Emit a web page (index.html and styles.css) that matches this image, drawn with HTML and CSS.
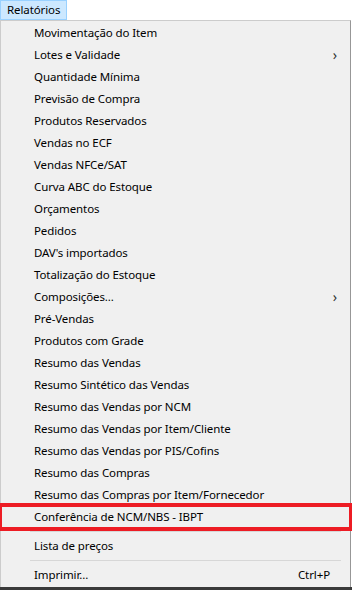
FILE: index.html
```html
<!DOCTYPE html>
<html lang="pt">
  <head>
    <meta charset="UTF-8" />
    <title>Relatórios</title>
    <link rel="stylesheet" href="styles.css">
  </head>
  <body>
    <div class="menubar">
      <div class="menubar-item active">Relatórios</div>
    </div>
    <div class="menu">
      <div class="item">Movimentação do Item</div>
      <div class="item has-sub">Lotes e Validade<span class="arrow">&rsaquo;</span></div>
      <div class="item">Quantidade Mínima</div>
      <div class="item">Previsão de Compra</div>
      <div class="item">Produtos Reservados</div>
      <div class="item">Vendas no ECF</div>
      <div class="item">Vendas NFCe/SAT</div>
      <div class="item">Curva ABC do Estoque</div>
      <div class="item">Orçamentos</div>
      <div class="item">Pedidos</div>
      <div class="item">DAV's importados</div>
      <div class="item">Totalização do Estoque</div>
      <div class="item has-sub">Composições...<span class="arrow">&rsaquo;</span></div>
      <div class="item">Pré-Vendas</div>
      <div class="item">Produtos com Grade</div>
      <div class="item">Resumo das Vendas</div>
      <div class="item">Resumo Sintético das Vendas</div>
      <div class="item">Resumo das Vendas por NCM</div>
      <div class="item">Resumo das Vendas por Item/Cliente</div>
      <div class="item">Resumo das Vendas por PIS/Cofins</div>
      <div class="item">Resumo das Compras</div>
      <div class="item">Resumo das Compras por Item/Fornecedor</div>
      <div class="item marked">Conferência de NCM/NBS - IBPT</div>
      <div class="separator"></div>
      <div class="item">Lista de preços</div>
      <div class="separator"></div>
      <div class="item">Imprimir...<span class="shortcut">Ctrl+P</span></div>
    </div>
    <div class="bottom-edge"></div>
  </body>
</html>
```

FILE: styles.css
```css
html,
body {
  margin: 0;
  padding: 0;
}

body {
  width: 352px;
  height: 590px;
  overflow: hidden;
  background: #ffffff;
  font-family: "Noto Sans", "Open Sans", sans-serif;
  font-size: 11.5px;
  letter-spacing: -0.1px;
  color: #000000;
}

.menubar {
  display: flex;
  height: 20px;
  background: #ffffff;
}

.menubar-item {
  box-sizing: border-box;
  height: 20px;
  padding: 0 6px;
  line-height: 18px;
  border: 1px solid transparent;
}

.menubar-item.active {
  background: #cce8ff;
  border-color: #99d1ff;
}

.menu {
  box-sizing: border-box;
  width: 351px;
  height: 567px;
  padding: 1px 0;
  background: #f0f0f0;
  border: 1px solid #cccccc;
  border-right-color: #979797;
  border-bottom: none;
}

.item {
  box-sizing: border-box;
  position: relative;
  display: flex;
  align-items: center;
  height: 22px;
  padding-left: 33px;
  padding-right: 20px;
  padding-bottom: 2px;
  white-space: nowrap;
}

.item .arrow {
  margin-left: auto;
  margin-right: -7px;
  font-size: 14px;
  color: #333333;
}

.item .shortcut {
  margin-left: auto;
  margin-right: 0;
}

.item.marked {
  outline: 4px solid #ed1c24;
  outline-offset: -1px;
}

.separator {
  height: 7px;
  margin-left: 29px;
  margin-right: 9px;
  display: flex;
  align-items: center;
}

.separator::before {
  content: "";
  flex: 1;
  height: 1px;
  background: #d7d7d7;
}

.bottom-edge {
  height: 3px;
  background: #3a3a3a;
}
```
